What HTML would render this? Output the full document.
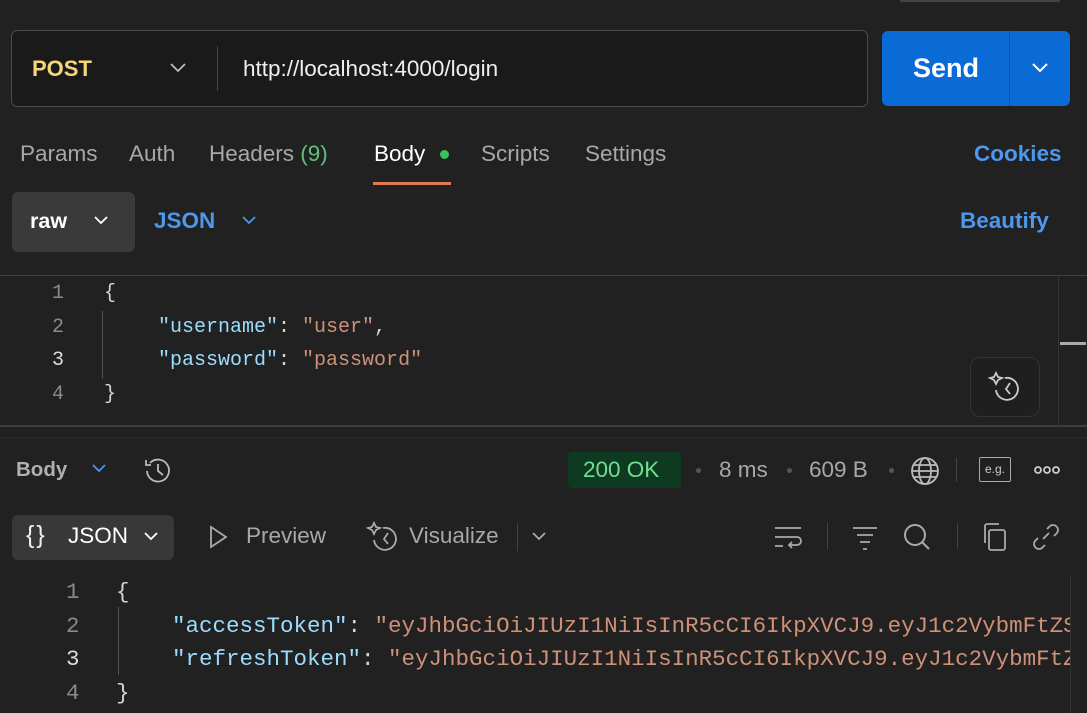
<!DOCTYPE html>
<html><head><meta charset="utf-8"><style>
*{margin:0;padding:0;box-sizing:border-box}
body{width:1087px;height:713px;background:#212121;font-family:"Liberation Sans",sans-serif;overflow:hidden;position:relative;color:#ddd}
.a{position:absolute;white-space:nowrap}
.mono{font-family:"Liberation Mono",monospace;position:absolute;white-space:nowrap}
.e{font-size:20px}.r{font-size:22.5px}
.k{color:#9cdcfe}.s{color:#ce9178}.w{color:#d4d4d4}.n{color:#8a8a8a}
.t{font-size:22.5px;color:#a8a8a8;top:141px}
svg{position:absolute}
</style></head><body>
<div class="a" style="left:900px;top:0;width:160px;height:2px;background:#444"></div>
<div class="a" style="left:11px;top:30px;width:857px;height:77px;border:1px solid #4a4a4a;border-radius:6px;background:#1a1a1a"></div>
<div class="a" style="left:32px;top:56px;font-size:22px;font-weight:bold;color:#f5d77a">POST</div>
<svg style="left:168px;top:61px" width="20" height="14" viewBox="0 0 20 14"><path d="M3 3l7 7 7-7" stroke="#bbb" stroke-width="1.8" fill="none"/></svg>
<div class="a" style="left:217px;top:46px;width:1px;height:45px;background:#444"></div>
<div class="a" style="left:243px;top:56px;font-size:22.5px;color:#eee">http://localhost:4000/login</div>
<div class="a" style="left:882px;top:31px;width:188px;height:75px;background:#0b6bd6;border-radius:6px"></div>
<div class="a" style="left:1009px;top:31px;width:1px;height:75px;background:#0a55ab"></div>
<div class="a" style="left:913px;top:53px;font-size:27px;font-weight:bold;color:#fff">Send</div>
<svg style="left:1030px;top:61px" width="20" height="14" viewBox="0 0 20 14"><path d="M3 3l7 7 7-7" stroke="#fff" stroke-width="2" fill="none"/></svg>
<div class="a t" style="left:20px">Params</div>
<div class="a t" style="left:129px">Auth</div>
<div class="a t" style="left:209px">Headers <span style="color:#5fc07a">(9)</span></div>
<div class="a t" style="left:374px;color:#fff">Body</div>
<div class="a" style="left:440px;top:150px;width:9px;height:9px;border-radius:50%;background:#3cc05a"></div>
<div class="a" style="left:373px;top:182px;width:78px;height:3px;background:#e07a55"></div>
<div class="a t" style="left:481px">Scripts</div>
<div class="a t" style="left:585px">Settings</div>
<div class="a" style="left:974px;top:141px;font-size:22.5px;font-weight:bold;color:#4d97ef">Cookies</div>
<div class="a" style="left:12px;top:192px;width:123px;height:60px;background:#3a3a3a;border-radius:6px"></div>
<div class="a" style="left:30px;top:209px;font-size:21.5px;font-weight:bold;color:#fff">raw</div>
<svg style="left:92px;top:215px" width="18" height="12" viewBox="0 0 18 12"><path d="M3 2l6 6 6-6" stroke="#fff" stroke-width="1.8" fill="none"/></svg>
<div class="a" style="left:154px;top:208px;font-size:22.5px;font-weight:bold;color:#4d97ef">JSON</div>
<svg style="left:240px;top:215px" width="18" height="12" viewBox="0 0 18 12"><path d="M3 2l6 6 6-6" stroke="#4d97ef" stroke-width="1.8" fill="none"/></svg>
<div class="a" style="left:960px;top:208px;font-size:22.5px;font-weight:bold;color:#4d97ef">Beautify</div>
<div class="a" style="left:0;top:275px;width:1087px;height:1px;background:#3e3e3e"></div>
<div class="a" style="left:0;top:425px;width:1087px;height:2px;background:#3e3e3e"></div>
<div class="a" style="left:1058px;top:276px;width:1px;height:150px;background:#333"></div>
<div class="a" style="left:1060px;top:342px;width:26px;height:3px;background:#aaa"></div>
<div class="a" style="left:102px;top:311px;width:1px;height:67px;background:#555"></div>
<div class="mono e n" style="left:52px;top:282px">1</div>
<div class="mono e n" style="left:52px;top:316px">2</div>
<div class="mono e" style="left:52px;top:349px;color:#ddd">3</div>
<div class="mono e n" style="left:52px;top:383px">4</div>
<div class="mono e w" style="left:104px;top:282px">{</div>
<div class="mono e" style="left:158px;top:316px"><span class="k">"username"</span><span class="w">: </span><span class="s">"user"</span><span class="w">,</span></div>
<div class="mono e" style="left:158px;top:349px"><span class="k">"password"</span><span class="w">: </span><span class="s">"password"</span></div>
<div class="mono e w" style="left:104px;top:383px">}</div>
<div class="a" style="left:970px;top:357px;width:70px;height:60px;border:1px solid #333;border-radius:10px;background:#1f1f1f"></div>
<svg style="left:988px;top:370px" width="34" height="34" viewBox="0 0 34 34" fill="none" stroke="#ccc" stroke-width="1.8"><path d="M8 3l2 4 4 1-4 2-2 4-2-4-4-2 4-1z"/><path d="M17 8a11 11 0 1 1-9 12"/><path d="M22 13l-4 6 4 5"/></svg>
<div class="a" style="left:0;top:437px;width:1087px;height:1px;background:#2c2c2c"></div>
<div class="a" style="left:16px;top:458px;font-size:20.5px;font-weight:bold;color:#b0b0b0">Body</div>
<svg style="left:90px;top:463px" width="18" height="12" viewBox="0 0 18 12"><path d="M3 2l6 6 6-6" stroke="#4d97ef" stroke-width="1.8" fill="none"/></svg>
<svg style="left:142px;top:455px" width="32" height="32" viewBox="0 0 32 32" fill="none" stroke="#bbb" stroke-width="1.8"><path d="M5 16a11 11 0 1 0 3-8"/><path d="M4 5v5h5"/><path d="M16 9v7l5 4"/></svg>
<div class="a" style="left:568px;top:452px;width:113px;height:36px;background:#0f3a22;border-radius:4px"></div>
<div class="a" style="left:583px;top:457px;font-size:22.5px;color:#6fe08f">200 OK</div>
<div class="a" style="left:696px;top:468px;width:5px;height:5px;border-radius:50%;background:#555"></div>
<div class="a" style="left:719px;top:457px;font-size:22.5px;color:#a8a8a8">8 ms</div>
<div class="a" style="left:787px;top:468px;width:5px;height:5px;border-radius:50%;background:#555"></div>
<div class="a" style="left:809px;top:457px;font-size:22.5px;color:#a8a8a8">609 B</div>
<div class="a" style="left:889px;top:468px;width:5px;height:5px;border-radius:50%;background:#555"></div>
<svg style="left:909px;top:455px" width="32" height="32" viewBox="0 0 32 32" fill="none" stroke="#bbb" stroke-width="1.8"><circle cx="16" cy="16" r="13"/><ellipse cx="16" cy="16" rx="6" ry="13"/><path d="M3 16h26M5 10h22M5 22h22"/></svg>
<div class="a" style="left:956px;top:458px;width:1px;height:24px;background:#444"></div>
<div class="a" style="left:979px;top:457px;width:32px;height:25px;border:1.5px solid #aaa;border-radius:2px;font-size:12px;color:#ccc;text-align:center;line-height:22px">e.g.</div>
<svg style="left:1033px;top:464px" width="28" height="12" viewBox="0 0 28 12" fill="none" stroke="#ccc" stroke-width="1.8"><circle cx="5" cy="6" r="3"/><circle cx="14" cy="6" r="3"/><circle cx="23" cy="6" r="3"/></svg>
<div class="a" style="left:12px;top:515px;width:162px;height:45px;background:#383838;border-radius:6px"></div>
<div class="a" style="left:26px;top:521px;font-size:25px;color:#eee;letter-spacing:2px">{}</div>
<div class="a" style="left:68px;top:523px;font-size:22.5px;color:#fff">JSON</div>
<svg style="left:142px;top:531px" width="18" height="12" viewBox="0 0 18 12"><path d="M3 2l6 6 6-6" stroke="#fff" stroke-width="1.8" fill="none"/></svg>
<svg style="left:206px;top:524px" width="26" height="26" viewBox="0 0 26 26"><path d="M5 3l15 10-15 10z" stroke="#aaa" stroke-width="1.8" fill="none"/></svg>
<div class="a" style="left:246px;top:523px;font-size:22.5px;color:#a8a8a8">Preview</div>
<svg style="left:366px;top:520px" width="34" height="34" viewBox="0 0 34 34" fill="none" stroke="#aaa" stroke-width="1.8"><path d="M8 3l2 4 4 1-4 2-2 4-2-4-4-2 4-1z"/><path d="M17 8a11 11 0 1 1-9 12"/><path d="M22 13l-4 6 4 5"/></svg>
<div class="a" style="left:409px;top:523px;font-size:22.5px;color:#a8a8a8">Visualize</div>
<div class="a" style="left:517px;top:523px;width:1px;height:28px;background:#444"></div>
<svg style="left:530px;top:531px" width="18" height="12" viewBox="0 0 18 12"><path d="M3 2l6 6 6-6" stroke="#aaa" stroke-width="1.8" fill="none"/></svg>
<svg style="left:772px;top:523px" width="32" height="30" viewBox="0 0 32 30" fill="none" stroke="#aaa" stroke-width="1.8"><path d="M3 5h26M3 14h22a4 4 0 0 1 0 8h-8M20 19l-3 3 3 3M3 23h8"/></svg>
<div class="a" style="left:827px;top:523px;width:1px;height:26px;background:#444"></div>
<svg style="left:850px;top:523px" width="30" height="30" viewBox="0 0 30 30" fill="none" stroke="#aaa" stroke-width="1.8"><path d="M3 5h24M7 12h16M10 19h10M13 26h4"/></svg>
<svg style="left:901px;top:521px" width="32" height="32" viewBox="0 0 32 32" fill="none" stroke="#aaa" stroke-width="2"><circle cx="14" cy="14" r="10"/><path d="M21 21l7 7"/></svg>
<div class="a" style="left:957px;top:523px;width:1px;height:26px;background:#444"></div>
<svg style="left:980px;top:521px" width="30" height="32" viewBox="0 0 30 32" fill="none" stroke="#aaa" stroke-width="1.8"><rect x="9" y="9" width="16" height="20" rx="2"/><path d="M5 22V5a2 2 0 0 1 2-2h12"/></svg>
<svg style="left:1030px;top:520px" width="32" height="34" viewBox="0 0 32 34" fill="none" stroke="#aaa" stroke-width="1.8"><path d="M13 19l6-6M17 9l3-3a5 5 0 0 1 7 7l-3 3M15 25l-3 3a5 5 0 0 1-7-7l3-3"/></svg>
<div class="a" style="left:1070px;top:575px;width:1px;height:138px;background:#333"></div>
<div class="a" style="left:118px;top:607px;width:1px;height:68px;background:#555"></div>
<div class="mono r n" style="left:66px;top:579px">1</div>
<div class="mono r n" style="left:66px;top:613px">2</div>
<div class="mono r" style="left:66px;top:646px;color:#ddd">3</div>
<div class="mono r n" style="left:66px;top:680px">4</div>
<div class="mono r w" style="left:116px;top:579px">{</div>
<div class="a" style="left:0;top:600px;width:1070px;height:80px;overflow:hidden">
<div class="mono r" style="left:172px;top:13px"><span class="k">"accessToken"</span><span class="w">: </span><span class="s">"eyJhbGciOiJIUzI1NiIsInR5cCI6IkpXVCJ9.eyJ1c2VybmFtZSI6InVzZXIi</span></div>
<div class="mono r" style="left:172px;top:46px"><span class="k">"refreshToken"</span><span class="w">: </span><span class="s">"eyJhbGciOiJIUzI1NiIsInR5cCI6IkpXVCJ9.eyJ1c2VybmFtZSI6InVzZXIi</span></div>
</div>
<div class="mono r w" style="left:116px;top:680px">}</div>
</body></html>
